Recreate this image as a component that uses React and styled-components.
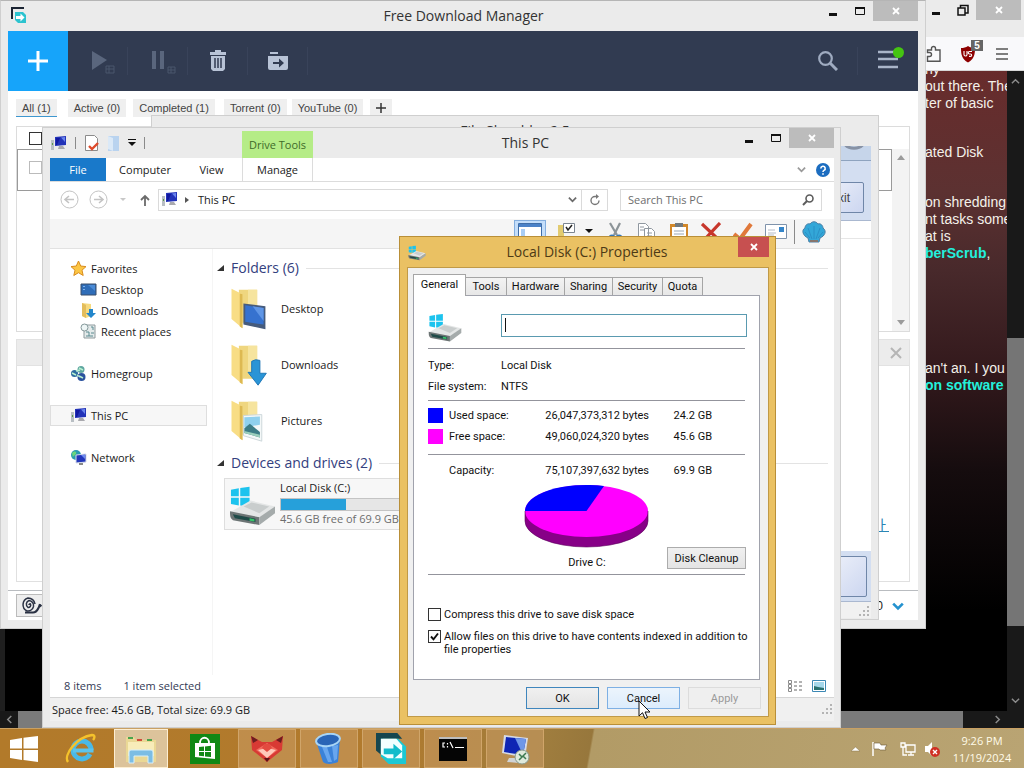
import React from "react";
import styled, { createGlobalStyle, css } from "styled-components";

const UI = `"Open Sans", "Noto Sans", sans-serif`;
const SANS = `"Liberation Sans", Arial, sans-serif`;

const GlobalStyle = createGlobalStyle`
  *, *::before, *::after { box-sizing: border-box; }
  html, body { margin: 0; height: 100%; overflow: hidden; }
  body { font-family: ${UI}; font-size: 11px; line-height: 16px; color: #1a1a1a; }
  button, input { font: inherit; color: inherit; margin: 0; padding: 0; border-radius: 0; }
  h1, h2, p, ul, dl, dd { margin: 0; padding: 0; font-weight: 400; }
  ul { list-style: none; }
  svg { display: block; flex: none; }
`;

/* ---------- desktop ---------- */

const Desktop = styled.div`
  display: flex;
  flex-direction: column;
  height: 100vh;
  background: #000;
  overflow: hidden;
`;

const Workspace = styled.main`
  position: relative;
  flex: 1;
  overflow: hidden;
`;

const Win = styled.section`
  position: absolute;
  display: flex;
  flex-direction: column;
  background: #ebebeb;
  border: 1px solid #cfcfcf;
`;

const Plain = styled.button`
  display: flex;
  align-items: center;
  justify-content: center;
  border: 0;
  background: none;
`;

const Spacer = styled.div`
  flex: 1;
`;

const CaptionGroup = styled.div`
  display: flex;
  align-self: flex-start;
`;

const CaptionButton = styled(Plain)`
  width: ${(p) => (p.$close ? 45 : 27)}px;
  height: 20px;
  background: ${(p) => (p.$close ? "#bcbcbc" : "transparent")};
  color: ${(p) => (p.$close ? "#fff" : "#111")};
`;

function Captions({ restore }) {
  return (
    <CaptionGroup>
      <CaptionButton aria-label="Minimize">
        <svg width="12" height="12" viewBox="0 0 12 12"><path d="M2 8h8v3H2z" fill="currentColor" /></svg>
      </CaptionButton>
      <CaptionButton aria-label="Maximize">
        {restore ? (
          <svg width="12" height="12" viewBox="0 0 12 12" fill="none" stroke="currentColor" strokeWidth="1.5"><path d="M1 4h7v7H1zM3.500 4V1.500H11V9H8" /></svg>
        ) : (
          <svg width="12" height="12" viewBox="0 0 12 12" fill="none" stroke="currentColor"><path d="M1.500 2.500h9v7h-9z" /><path d="M1 3h10" strokeWidth="2" /></svg>
        )}
      </CaptionButton>
      <CaptionButton $close aria-label="Close">
        <svg width="8" height="8" viewBox="0 0 8 8" stroke="currentColor" strokeWidth="1.800"><path d="M1 1l6 6M7 1L1 7" /></svg>
      </CaptionButton>
    </CaptionGroup>
  );
}

/* ---------- browser window behind everything ---------- */

const BrowserWin = styled(Win)`
  inset: 0;
  border: 0;
  background: #1f1f1f;
`;

const BrowserTabs = styled.div`
  display: flex;
  justify-content: flex-end;
  height: 37px;
  padding-right: 3px;
  background: #ebebeb;
`;

const BrowserBar = styled.div`
  display: flex;
  align-items: center;
  justify-content: flex-end;
  gap: 16px;
  height: 34px;
  padding-right: 14px;
  background: #f9f9fb;
  border-bottom: 1px solid #d8d8d8;
`;

const Shield = styled(Plain)`
  position: relative;
  width: 20px;
  height: 20px;
`;

const Badge = styled.span`
  position: absolute;
  top: -4px;
  right: -5px;
  width: 12px;
  background: #666;
  color: #fff;
  font: 700 10px/11px ${SANS};
  text-align: center;
`;

const BrowserView = styled.div`
  display: flex;
  flex: 1;
  min-height: 0;
`;

const WebPage = styled.article`
  flex: 1;
  overflow: hidden;
  margin-left: 5px;
  padding-left: calc(100% - 104px);
  background: linear-gradient(#682c2c 0, #5c3131 120px, #48292b 200px, #33191c 300px, #150c0e 400px, #000 540px);
  color: #f4f1ea;
  font: 14px/17px ${SANS};
  white-space: nowrap;
`;

const Para = styled.p`
  margin-top: ${(p) => p.$gap || 0}px;
`;

const PageLink = styled.a`
  color: #23f0dc;
  font-weight: 700;
  text-decoration: none;
`;

const ScrollTrack = styled.div`
  display: flex;
  flex-direction: column;
  align-items: center;
  width: 17px;
  padding: 6px 0;
  background: #191919;
`;

const ScrollThumb = styled.div`
  width: 17px;
  height: 288px;
  margin-top: 252px;
  background: #757575;
`;

const ScrollFoot = styled.div`
  display: flex;
  align-items: center;
  height: 17px;
  padding: 0 22px 0 5px;
  background: #191919;
`;

const FootThumb = styled.div`
  flex: 1;
  height: 17px;
  margin: 0 30px 0 4px;
  background: #7b7b7b;
`;

function Arrow({ dir = "down", size = 9, color = "#8c8c8c", width = 1.6 }) {
  const d = { down: "M1 3l4 4 4-4", up: "M1 7l4-4 4 4", left: "M7 1L3 5l4 4", right: "M3 1l4 4-4 4" }[dir];
  return <svg width={size} height={size} viewBox="0 0 10 10" fill="none" stroke={color} strokeWidth={width}><path d={d} /></svg>;
}

function Browser() {
  return (
    <BrowserWin aria-label="Browser">
      <BrowserTabs><Captions restore /></BrowserTabs>
      <BrowserBar>
        <Plain aria-label="Extensions">
          <svg width="16" height="18" viewBox="0 0 16 18" fill="none" stroke="#555" strokeWidth="1.400"><path d="M1.500 15.500v-4h2a2 2 0 000-4h-2V5h4V3.500a2 2 0 014 0V5H14v11.300H1.500z" /></svg>
        </Plain>
        <Shield aria-label="Content blocker">
          <svg width="16" height="18" viewBox="0 0 16 18"><path d="M8 1c2 1.500 4.500 2 7 2 0 7-1 11-7 14.500C2 14 1 10 1 3c2.500 0 5-.5 7-2z" fill="#8e0000" /><path d="M4 6v3.500a1.500 1.500 0 003 0V6M12 6.500H9.500a1.200 1.200 0 000 2.500h1a1.200 1.200 0 010 2.400H9" fill="none" stroke="#fff" strokeWidth="1.100" /></svg>
          <Badge>5</Badge>
        </Shield>
        <Plain aria-label="Menu">
          <svg width="16" height="12" viewBox="0 0 16 12" stroke="#555" strokeWidth="1.400"><path d="M2 1h12M2 6h12M2 11h12" /></svg>
        </Plain>
      </BrowserBar>
      <BrowserView>
        <WebPage>
          <Para $gap={-10}>ny<br />out there. The<br />ter of basic</Para>
          <Para $gap={32}>ated Disk</Para>
          <Para $gap={33}>on shredding<br />nt tasks some<br />at is<br /><PageLink href="#scrub">berScrub</PageLink>,</Para>
          <Para $gap={98}>an't an. I you<br /><PageLink href="#software">on software</PageLink></Para>
        </WebPage>
        <ScrollTrack><Arrow dir="up" /><ScrollThumb /><Spacer /><Arrow /></ScrollTrack>
      </BrowserView>
      <ScrollFoot><Arrow dir="left" /><FootThumb /><Arrow dir="right" /></ScrollFoot>
    </BrowserWin>
  );
}

/* ---------- Free Download Manager ---------- */

const FdmWin = styled(Win)`
  top: 0;
  left: 0;
  right: 98px;
  height: 629px;
  padding: 0 7px 8px;
  border-top-color: #b5b5b5;
`;

const WinTitle = styled.header`
  display: flex;
  align-items: center;
  height: 30px;
`;

const TitleText = styled.h1`
  flex: 1;
  padding-left: ${(p) => p.$lead || 0}px;
  font-size: 14px;
  line-height: 20px;
  text-align: center;
  color: #333;
`;

const FdmBar = styled.div`
  display: flex;
  align-items: center;
  height: 60px;
  flex: none;
  background: #313b51;
`;

const AddButton = styled(Plain)`
  width: 60px;
  height: 60px;
  background: #16a4fa;
`;

const ToolButton = styled(Plain)`
  width: 60px;
  height: 28px;
  padding-left: ${(p) => p.$lead || 0}px;
  border-right: ${(p) => (p.$last ? 0 : 1)}px solid #39435a;
`;

const FdmBody = styled.div`
  display: flex;
  flex-direction: column;
  flex: 1;
  background: #fff;
`;

const FilterRow = styled.nav`
  display: flex;
  height: 35px;
  padding: 8px 8px 9px;
`;

const Filter = styled.button`
  height: 18px;
  margin-right: ${(p) => p.$gap || 5}px;
  padding: 0 6px;
  border: 0;
  border-bottom: 1px solid ${(p) => (p.$on ? "#3e97cf" : "#efefef")};
  background: #efefef;
  color: #444;
  font: 11px/16px ${SANS};
  white-space: nowrap;
`;

const ListBox = styled.div`
  display: flex;
  height: 206px;
  margin: 0 8px;
  border: 1px solid #dcdcdc;
`;

const ListRows = styled.div`
  flex: 1;
`;

const ListRow = styled.label`
  display: block;
  height: ${(p) => (p.$head ? 22 : 42)}px;
  padding: ${(p) => (p.$head ? 4 : 11)}px 11px;
  border: 1px solid ${(p) => (p.$head ? "transparent" : "#9a9a9a")};
`;

const BoxTick = styled.input.attrs({ type: "checkbox" })`
  appearance: none;
  display: block;
  flex: none;
  width: 13px;
  height: 13px;
  border: 1px solid ${(p) => (p.$dim ? "#bbb" : "#333")};
  background: #fff;
  &:checked {
    background: #fff url("data:image/svg+xml,%3Csvg xmlns='http://www.w3.org/2000/svg' viewBox='0 0 11 11'%3E%3Cpath d='M2 5.500l2.500 2.800L9 2.500' fill='none' stroke='%23111' stroke-width='1.900'/%3E%3C/svg%3E");
  }
`;

const ListScroll = styled.div`
  display: flex;
  flex-direction: column;
  justify-content: space-between;
  align-items: center;
  width: 17px;
  margin-top: 22px;
  padding: 6px 0;
  background: #f3f3f3;
`;

const DetailHead = styled.div`
  display: flex;
  align-items: center;
  justify-content: flex-end;
  height: 27px;
  margin: 7px 8px 0;
  padding-right: 7px;
  background: #ececec;
  border: 1px solid #e2e2e2;
`;

const DetailBody = styled.div`
  flex: 1;
  margin: 0 8px 8px;
  padding: 150px 20px 0 0;
  border: 1px solid #e0e0e0;
  border-top: 0;
  text-align: right;
`;

const DetailLink = styled.a`
  color: #2a86b5;
  font: 14px/16px "Noto Sans CJK KR", sans-serif;
`;

const FdmStatus = styled.footer`
  display: flex;
  align-items: center;
  height: 30px;
  padding: 0 14px 0 8px;
  border-top: 1px solid #b9bcc0;
  gap: 9px;
  font: 12px/16px ${SANS};
`;

const SnailButton = styled(Plain)`
  width: 60px;
  height: 23px;
  justify-content: flex-start;
  padding-left: 4px;
  border: 1px solid #bbb;
  background: #eee;
`;

function FdmLogo({ size }) {
  return (
    <svg width={size} height={size} viewBox="0 0 32 32">
      <path d="M0 0h22l5 6H7v18L0 18z" fill="#16464f" />
      <path d="M5 6h18l8 8v18H13l-8-8z" fill="#1cc8d4" />
      <path d="M5 6h16l6 7v13H12L5 22z" fill="#f2ffff" />
      <path d="M8 16h10v-5l9 8-9 8v-5H8z" fill="#12bccb" />
    </svg>
  );
}

function FreeDownloadManager() {
  return (
    <FdmWin aria-label="Free Download Manager">
      <WinTitle>
        <svg width="24" height="24" viewBox="0 0 24 24"><path d="M4 15V4h12" fill="none" stroke="#1b2433" strokeWidth="2" /><path d="M7 8h8l3 3v8h-8l-3-3z" fill="#2cc3cf" /><path d="M8 12h4.500v-2.500l4 4-4 4V15H8z" fill="#fff" /></svg>
        <TitleText $lead={76}>Free Download Manager</TitleText>
        <Captions />
      </WinTitle>
      <FdmBar>
        <AddButton aria-label="Add download">
          <svg width="20" height="20" viewBox="0 0 20 20" stroke="#fff" strokeWidth="3"><path d="M10 0v20M0 10h20" /></svg>
        </AddButton>
        <ToolButton $lead={10} aria-label="Start all">
          <svg width="24" height="26" viewBox="0 0 24 26"><path d="M1 3l15 9-15 10z" fill="#5a667d" /><path d="M15 18h8v7h-8zM18 18v7M15 21h8" fill="none" stroke="#4b566c" /></svg>
        </ToolButton>
        <ToolButton $lead={10} aria-label="Pause all">
          <svg width="26" height="26" viewBox="0 0 26 26"><path d="M2 3h4v18H2zM10 3h4v18h-4z" fill="#5a667d" /><path d="M18 19h7v6h-7zM21 19v6M18 22h7" fill="none" stroke="#4b566c" /></svg>
        </ToolButton>
        <ToolButton aria-label="Delete">
          <svg width="18" height="22" viewBox="0 0 18 22"><path d="M6 0h6v2h5v3H1V2h5zM2 6h14v13l-2 2H4l-2-2z" fill="#b8c3d6" /><path d="M6 8v10M9 8v10M12 8v10" stroke="#313b51" strokeWidth="1.500" /></svg>
        </ToolButton>
        <ToolButton aria-label="Move to folder">
          <svg width="20" height="18" viewBox="0 0 20 18"><path d="M2 0h8v2H2zM0 4h20v12a2 2 0 01-2 2H2a2 2 0 01-2-2z" fill="#b8c3d6" /><path d="M5 10h6V6.500L16 11l-5 4.500V12H5z" fill="#313b51" /></svg>
        </ToolButton>
        <Spacer />
        <ToolButton aria-label="Search">
          <svg width="20" height="20" viewBox="0 0 20 20" fill="none" stroke="#9fabc0"><circle cx="7.500" cy="7.500" r="6.300" strokeWidth="2.200" /><path d="M12 12l7 7" strokeWidth="3" /></svg>
        </ToolButton>
        <ToolButton $last $lead={5} aria-label="Menu">
          <svg width="28" height="28" viewBox="0 0 28 28"><path d="M1 5h20M1 12h20M1 20h20" stroke="#aab5c9" strokeWidth="2.600" /><circle cx="21.500" cy="5.500" r="5.500" fill="#45c412" /></svg>
        </ToolButton>
      </FdmBar>
      <FdmBody>
        <FilterRow>
          <Filter $on $gap={11}>All (1)</Filter>
          <Filter $gap={7}>Active (0)</Filter>
          <Filter $gap={9}>Completed (1)</Filter>
          <Filter>Torrent (0)</Filter>
          <Filter $gap={7}>YouTube (0)</Filter>
          <Filter aria-label="Add tag">
            <svg width="10" height="10" viewBox="0 0 10 10" stroke="#333" strokeWidth="1.500"><path d="M5 0v10M0 5h10" /></svg>
          </Filter>
        </FilterRow>
        <ListBox>
          <ListRows>
            <ListRow $head><BoxTick aria-label="Select all" /></ListRow>
            <ListRow><BoxTick $dim aria-label="Select download" /></ListRow>
          </ListRows>
          <ListScroll>
            <svg width="8" height="5" viewBox="0 0 8 5"><path d="M0 5l4-5 4 5z" fill="#9b9b9b" /></svg>
            <svg width="8" height="5" viewBox="0 0 8 5"><path d="M0 0l4 5 4-5z" fill="#9b9b9b" /></svg>
          </ListScroll>
        </ListBox>
        <DetailHead>
          <Plain aria-label="Close details"><svg width="12" height="12" viewBox="0 0 12 12" stroke="#b5b5b5" strokeWidth="2"><path d="M1 1l10 10M11 1L1 11" /></svg></Plain>
        </DetailHead>
        <DetailBody><DetailLink href="#file">ㅏ</DetailLink></DetailBody>
        <FdmStatus>
          <SnailButton aria-label="Snail mode">
            <svg width="22" height="17" viewBox="0 0 22 17" fill="none" stroke="#2a3143"><path d="M8 8a1 1 0 011.500-1A2.500 2.500 0 017 10.500 4 4 0 018 3.500a5 5 0 014.500 6A6 6 0 016 14 7 7 0 017 1a7 7 0 017 6" strokeWidth="1.500" /><path d="M4 15.500h8c4 0 4.500-3 6-5.500l1-3M18 10l2.500-2" strokeWidth="2.200" /></svg>
          </SnailButton>
          <Spacer />
          0
          <Arrow size={12} color="#2492cf" width={2.2} />
        </FdmStatus>
      </FdmBody>
    </FdmWin>
  );
}

/* ---------- File Shredder ---------- */

const ShredWin = styled(Win)`
  top: 115px;
  left: 151px;
  right: 145px;
  height: 505px;
  padding: 0 7px 1px;
`;

const ShredBanner = styled.div`
  display: flex;
  justify-content: flex-end;
  height: 15px;
  overflow: hidden;
  background: #c6d5ea;
  border-bottom: 1px solid #8ea3bf;
`;

const ShredPanel = styled.div`
  display: flex;
  align-items: flex-end;
  justify-content: flex-end;
  height: ${(p) => p.$h}px;
  padding: 0 ${(p) => p.$pad}px ${(p) => p.$pad}px 0;
  background: #d3def1;
  border-bottom: 1px solid #aab8d0;
`;

const ShredButton = styled.button`
  width: 80px;
  height: ${(p) => p.$h}px;
  border: 1px solid #6f86a8;
  border-radius: 2px;
  background: linear-gradient(135deg, #fff, #ccd6f0);
  color: #444;
  text-align: right;
  padding-right: 13px;
  font: 12px/16px ${SANS};
`;

const ShredList = styled.div`
  flex: 1;
  background: #fff;
  padding-top: 17px;
`;

const Line = styled.div`
  height: 1px;
  background: #e6e6e6;
`;

const ShredStatus = styled.div`
  display: flex;
  align-items: flex-end;
  justify-content: flex-end;
  height: 16px;
  background: #f1f1f1;
`;

function Grip() {
  return <svg width="12" height="12" viewBox="0 0 12 12" fill="#b4b4b4"><path d="M8 0h2v2H8zM8 4h2v2H8zM8 8h2v2H8zM4 4h2v2H4zM4 8h2v2H4zM0 8h2v2H0z" /></svg>;
}

function FileShredder() {
  return (
    <ShredWin aria-label="File Shredder">
      <WinTitle><TitleText>File Shredder 2.5</TitleText></WinTitle>
      <ShredBanner>
        <svg width="30" height="14" viewBox="0 0 30 14" fill="none" stroke="#8792a5" strokeWidth="3"><path d="M3 -7a11 9 0 0020 0" transform="translate(0 4)" /></svg>
      </ShredBanner>
      <ShredPanel $h={60} $pad={7}><ShredButton $h={31}>Exit</ShredButton></ShredPanel>
      <ShredList><Line /></ShredList>
      <ShredPanel $h={51} $pad={4}><ShredButton $h={41} aria-label="Shred files" /></ShredPanel>
      <ShredStatus><Grip /></ShredStatus>
    </ShredWin>
  );
}

/* ---------- File Explorer ---------- */

const ExplorerWin = styled(Win)`
  top: 127px;
  left: 42px;
  right: 183px;
  bottom: 0;
  padding: 0 6px 6px 7px;
`;

const QuickBar = styled.div`
  display: flex;
  align-items: center;
  gap: 8px;
  width: 192px;
`;

const Sep = styled.span`
  width: 1px;
  height: ${(p) => p.$h || 12}px;
  background: #8a8a8a;
`;

const DriveTools = styled.div`
  align-self: flex-end;
  width: 71px;
  height: 27px;
  background: #b5ec87;
  color: #3f6a2a;
  line-height: 28px;
  text-align: center;
`;

const Ribbon = styled.nav`
  display: flex;
  align-items: center;
  height: 24px;
  flex: none;
  padding-right: 4px;
  background: #fff;
  border-bottom: 1px solid #dcdcdc;
`;

const RibbonTab = styled.button`
  width: ${(p) => p.$w}px;
  height: 23px;
  padding: 0;
  border: 0;
  background: #fff;
  ${(p) => p.$file && css`background: #1979ca; color: #fff;`}
  ${(p) => p.$tool && css`
    margin-left: 3px;
    border: solid #dcdcdc;
    border-width: 0 1px;
  `}
`;

const AddressRow = styled.div`
  display: flex;
  align-items: center;
  height: 37px;
  flex: none;
  padding: 0 12px 2px 10px;
  background: #fff;
`;

const NavButton = styled(Plain)`
  margin-right: ${(p) => p.$gap || 0}px;
`;

const AddressBox = styled.div`
  display: flex;
  align-items: center;
  flex: 1;
  height: 22px;
  margin-right: 12px;
  padding-left: 2px;
  border: 1px solid #dadada;
`;

const Crumb = styled.span`
  flex: 1;
  padding-left: 2px;
`;

const RefreshButton = styled(Plain)`
  width: 26px;
  height: 20px;
  margin-left: 4px;
  border-left: 1px solid #dadada;
`;

const SearchBox = styled.label`
  display: flex;
  align-items: center;
  width: 202px;
  height: 22px;
  padding: 0 7px;
  border: 1px solid #dadada;
`;

const SearchInput = styled.input`
  flex: 1;
  min-width: 0;
  border: 0;
  outline: 0;
  background: none;
  &::placeholder { color: #6d6d6d; opacity: 1; }
`;

const CommandBar = styled.div`
  display: flex;
  align-items: center;
  justify-content: flex-end;
  gap: 12px;
  height: 30px;
  flex: none;
  padding: 0 8px 4px 0;
  background: #f5f5f5;
  border-bottom: 1px solid #e2e2e2;
`;

const CommandGroup = styled.div`
  display: flex;
  align-items: center;
  gap: 7px;
`;

const Command = styled(Plain)`
  width: ${(p) => p.$w || 20}px;
  height: 24px;
  ${(p) => p.$on && css`background: #c4defa; border: 1px solid #84aede;`}
`;

const ExplorerBody = styled.div`
  display: flex;
  flex: 1;
  min-height: 0;
  background: #fff;
`;

const NavPane = styled.ul`
  width: 163px;
  padding-top: 9px;
  border-right: 1px solid #f5f5f5;
`;

const NavItem = styled.li`
  display: flex;
  align-items: center;
  gap: 4px;
  height: 21px;
  margin: ${(p) => (p.$group ? 21 : 0)}px 5px 0 0;
  padding-left: ${(p) => (p.$child ? 29 : 19)}px;
  border: 1px solid ${(p) => (p.$on ? "#dedede" : "transparent")};
  background: ${(p) => (p.$on ? "#f7f7f7" : "transparent")};
`;

const FilePane = styled.div`
  flex: 1;
  padding: 8px 6px 0 4px;
`;

const GroupHead = styled.h2`
  display: flex;
  align-items: center;
  gap: 7px;
  height: 22px;
  margin: ${(p) => p.$gap || 0}px 0 2px;
  color: #33407e;
  font-size: 14px;
  line-height: 20px;
  &::after { content: ""; flex: 1; height: 1px; background: #e3e3e3; }
`;

const Tile = styled.div`
  display: flex;
  align-items: center;
  gap: 11px;
  width: 248px;
  height: 56px;
  padding-left: 9px;
`;

const DriveTile = styled.div`
  display: flex;
  gap: 4px;
  width: 248px;
  height: 52px;
  margin: 4px 0 0 7px;
  padding: 1px 4px;
  border: 1px solid #dedede;
  background: #f7f7f7;
`;

const DriveInfo = styled.div`
  flex: 1;
  color: #6d6d6d;
`;

const DriveName = styled.div`
  color: #1a1a1a;
`;

const Meter = styled.div`
  height: 13px;
  margin: 2px 0 0;
  border: 1px solid #c4c4c4;
  background: #e6e6e6;
`;

const MeterFill = styled.div`
  width: 35%;
  height: 100%;
  background: #26a0da;
`;

const CountRow = styled.div`
  display: flex;
  align-items: center;
  gap: 22px;
  height: 23px;
  flex: none;
  padding: 0 8px 0 14px;
  background: #fff;
  border-bottom: 1px solid #d5d5d5;
  color: #333a55;
`;

const ViewIcons = styled.div`
  display: flex;
  gap: 9px;
`;

const SpaceRow = styled.footer`
  display: flex;
  align-items: center;
  height: 23px;
  flex: none;
  padding-left: 2px;
  background: #f0f0f0;
`;

function PcIcon({ size = 17 }) {
  return (
    <svg width={size} height={size} viewBox="0 0 17 17">
      <path d="M5 2l11-1v9l-11 1z" fill="#2333b8" /><path d="M6 3l4 0-3 7H6z" fill="#1219a0" /><path d="M11 2.500l4-.4v5z" fill="#6b86ee" />
      <path d="M9 11h4l2 3H8z" fill="#a9a9ae" /><path d="M1 5h3v10H1z" fill="#b9bfc4" /><path d="M2 8h1v2H2z" fill="#5a9d4a" />
    </svg>
  );
}

function DriveIcon({ size }) {
  return (
    <svg width={size} height={size} viewBox="0 0 48 48">
      <path d="M2 10l8-1.500v8H2zM11.500 8.200L21 7v9.500h-9.500zM2 18h8v8l-8-1.500zM11.500 18H21v9.500L11.500 26z" fill="#1cc3ee" />
      <path d="M1 33l21-12 25 6-16 12z" fill="#e4e6e6" /><path d="M15 27l8-4 18 4-10 7z" fill="#c9cdcd" />
      <path d="M1 32l30 6v8L4 41c-3-2-3-5-3-9z" fill="#6d7575" /><path d="M31 38l16-11v7L31 46z" fill="#a5abab" />
      <path d="M4 35l23 4.500V43L6 39z" fill="#1f4a48" /><path d="M21 39l5 1v2.500l-5-1z" fill="#38c56a" />
    </svg>
  );
}

function FolderIcon({ kind, size = 44 }) {
  return (
    <svg width={size} height={size} viewBox="0 0 44 48">
      <path d="M12 3h20v36H14z" fill="#efd67f" /><path d="M22 3h10v30H22z" fill="#f6e49e" />
      <path d="M4 2l12 6v37L4 35z" fill="#f8dd85" /><path d="M13 7l3 1v37l-3-2z" fill="#ddb952" />
      {kind === "desktop" && <><path d="M17 18l24 3v25l-24-5z" fill="#465b7c" /><path d="M19 20l20 3v18l-20-3z" fill="#3672cf" /><path d="M27 21l12 2v14z" fill="#5f96e6" /></>}
      {kind === "downloads" && <path d="M26 20q4-3 9-1v14h7L33 46 22 32h4z" fill="#2a94d6" stroke="#1b73b4" />}
      {kind === "pictures" && <><path d="M17 18l20-1v29l-20-6z" fill="#f4f8f8" stroke="#c9d4d8" /><path d="M18 20l17-1v9L18 31z" fill="#8fd0ee" /><path d="M18 32l6-5 11 9v6l-17-5z" fill="#3c7c86" /><path d="M18 35l17 4v3l-17-5z" fill="#9bcfbc" /></>}
    </svg>
  );
}

function NavIcon({ kind }) {
  if (kind === "pc") return <PcIcon />;
  return (
    <svg width="17" height="17" viewBox="0 0 17 17">
      {kind === "star" && <path d="M8.500 1l2.200 5 5.300.6-4 3.600 1.200 5.300-4.700-2.800-4.700 2.800L5 10.200 1 6.600 6.300 6z" fill="#fcc644" stroke="#d98c1e" />}
      {kind === "desktop" && <><path d="M1 3h15v11H1z" fill="#2f6db8" stroke="#3b4e6b" /><path d="M3 5h2v1H3zM3 8h2v1H3z" fill="#7fb2ec" /><path d="M8 4h7v6z" fill="#4a8bd6" /></>}
      {kind === "downloads" && <><path d="M2 1l9 1v12l-5 2-4-2z" fill="#f6da80" /><path d="M2 1l4 2v13l-4-2z" fill="#e3bd5c" /><path d="M9 7h4v4h3l-5 5-5-5h3z" fill="#2386cb" /></>}
      {kind === "recent" && <><path d="M4 2h11v13H4z" fill="#e3eaea" stroke="#8f9b9e" /><path d="M6 9h3v4M11 4h2v3M11 10h3M6 13h7" fill="none" stroke="#5a8a90" /><circle cx="4.500" cy="4.500" r="3.500" fill="#eef6f6" stroke="#86999b" /></>}
      {kind === "home" && <><circle cx="11" cy="4.500" r="3.500" fill="#5ea6a0" /><circle cx="4.500" cy="8.500" r="3.500" fill="#2d6c9f" /><circle cx="11.500" cy="12" r="4" fill="#2a529e" /><path d="M9 3l4 2M2 8l4 2M9 11l4 2M6 6l4-1M7 10l3 2" stroke="#b8f0d0" strokeWidth="1.500" /></>}
      {kind === "network" && <><circle cx="6" cy="6" r="5" fill="#279ab2" /><path d="M2 4c3-3 5-1 4 1s-3 1-3 4z" fill="#69d67b" /><path d="M6 6l10-1v8L6 14z" fill="#2236bb" stroke="#d3d9e8" /><path d="M11 6l4-.5V10z" fill="#6c89f0" /><path d="M9 14h4v2H9z" fill="#888" /></>}
    </svg>
  );
}

const NAV = [
  ["star", "Favorites"],
  ["desktop", "Desktop", "child"],
  ["downloads", "Downloads", "child"],
  ["recent", "Recent places", "child"],
  ["home", "Homegroup", "group"],
  ["pc", "This PC", "group", true],
  ["network", "Network", "group"],
];

const Fold = () => <svg width="7" height="7" viewBox="0 0 7 7"><path d="M7 0v6H0z" fill="#333" /></svg>;

const RoundArrow = ({ flip }) => (
  <svg width="19" height="19" viewBox="0 0 19 19" fill="none" stroke="#c3c3c3"><circle cx="9.500" cy="9.500" r="8.500" /><path d={flip ? "M5 9.500h9M10 6l4 3.500-4 3.500" : "M14 9.500H5M9 6L5 9.500 9 13"} strokeWidth="1.600" /></svg>
);

function Explorer() {
  return (
    <ExplorerWin aria-label="This PC">
      <WinTitle>
        <QuickBar>
          <PcIcon />
          <Sep />
          <Plain aria-label="Properties"><svg width="15" height="18" viewBox="0 0 15 18"><path d="M1.500 1.500h9l3 3v12h-12z" fill="#fff" stroke="#8b8b8b" /><path d="M5 12l3 3 6-6" fill="none" stroke="#de4b2c" strokeWidth="2.400" /></svg></Plain>
          <Plain aria-label="New folder"><svg width="13" height="17" viewBox="0 0 13 17"><path d="M1 1h11v15H1z" fill="#b9d3ef" /><path d="M1 1l5 2v13l-5-2z" fill="#dbe9f7" /></svg></Plain>
          <Plain aria-label="Customize"><svg width="8" height="8" viewBox="0 0 8 8"><path d="M0 0h8v1H0zM0 3h8L4 7z" fill="#111" /></svg></Plain>
          <Sep />
        </QuickBar>
        <DriveTools>Drive Tools</DriveTools>
        <TitleText $lead={3}>This PC</TitleText>
        <Captions />
      </WinTitle>
      <Ribbon>
        <RibbonTab $w={56} $file>File</RibbonTab>
        <RibbonTab $w={78}>Computer</RibbonTab>
        <RibbonTab $w={55}>View</RibbonTab>
        <RibbonTab $w={71} $tool>Manage</RibbonTab>
        <Spacer />
        <NavButton $gap={10} aria-label="Expand ribbon"><Arrow color="#9a9a9a" width={2} /></NavButton>
        <Plain aria-label="Help">
          <svg width="14" height="14" viewBox="0 0 14 14"><circle cx="7" cy="7" r="7" fill="#1c6dc0" /><path d="M4.800 5.400a2.200 2.200 0 113.200 2c-.8.400-1 .8-1 1.600M7 10.200v1.600" fill="none" stroke="#fff" strokeWidth="1.600" /></svg>
        </Plain>
      </Ribbon>
      <AddressRow>
        <NavButton $gap={10} aria-label="Back"><RoundArrow /></NavButton>
        <NavButton $gap={12} aria-label="Forward"><RoundArrow flip /></NavButton>
        <NavButton $gap={14} aria-label="Recent locations"><svg width="6" height="4" viewBox="0 0 6 4"><path d="M0 0h6L3 3z" fill="#c8c8c8" /></svg></NavButton>
        <NavButton $gap={8} aria-label="Up"><svg width="10" height="12" viewBox="0 0 10 12" fill="none" stroke="#6b6b6b" strokeWidth="1.800"><path d="M5 12V2M1 6l4-4 4 4" /></svg></NavButton>
        <AddressBox>
          <PcIcon />
          <svg width="18" height="8" viewBox="0 0 18 8"><path d="M7 1l4 3-4 3z" fill="#555" /></svg>
          <Crumb>This PC</Crumb>
          <Plain aria-label="Previous locations"><Arrow color="#6b6b6b" width={2} /></Plain>
          <RefreshButton aria-label="Refresh"><svg width="12" height="12" viewBox="0 0 12 12" fill="none" stroke="#777" strokeWidth="1.400"><path d="M10 6.500A4 4 0 116 2.500h2" /><path d="M7 0l3 2.500L7 5z" fill="#777" stroke="none" /></svg></RefreshButton>
        </AddressBox>
        <SearchBox>
          <SearchInput type="search" placeholder="Search This PC" aria-label="Search This PC" />
          <svg width="12" height="12" viewBox="0 0 12 12" fill="none" stroke="#5c5c5c" strokeWidth="1.600"><circle cx="7.500" cy="4.500" r="3.500" /><path d="M5 7l-4 4" strokeWidth="2" /></svg>
        </SearchBox>
      </AddressRow>
      <CommandBar>
        <Command $w={32} $on aria-label="Navigation pane"><svg width="24" height="18" viewBox="0 0 24 18"><path d="M.5.500h23v17H.5z" fill="#fff" stroke="#3f6ea8" /><path d="M1 1h22v3H1z" fill="#4b82c8" /><path d="M3 6h4v11H3z" fill="#a9cdf4" /></svg></Command>
        <CommandGroup>
          <Command aria-label="Select"><svg width="20" height="20" viewBox="0 0 20 20"><path d="M0 3h6v14H0z" fill="#e2cb70" /><path d="M5.500 1.500h11v9h-11z" fill="#fff" stroke="#7b8590" /><path d="M8 5l2 3 4-5" fill="none" stroke="#222" strokeWidth="1.500" /></svg></Command>
          <Command $w={8} aria-label="Select options"><svg width="8" height="5" viewBox="0 0 8 5"><path d="M0 0h8L4 4z" fill="#111" /></svg></Command>
        </CommandGroup>
        <Command aria-label="Cut"><svg width="16" height="20" viewBox="0 0 16 20" fill="none" stroke="#8c9498" strokeWidth="2.200"><path d="M3 1l7 12M13 1L7 13" /><circle cx="5" cy="16" r="2.500" stroke="#3979b5" /><circle cx="12" cy="16" r="2.500" stroke="#3979b5" /></svg></Command>
        <Command aria-label="Copy"><svg width="20" height="20" viewBox="0 0 20 20" fill="#fff" stroke="#9098a0"><path d="M1.500 1.500h7l3 3v10h-10zM7.500 6.500h7l3 3v9h-10z" /><path d="M3 5h4M3 8h4M10 11h5M10 14h5" /></svg></Command>
        <Command aria-label="Paste"><svg width="20" height="20" viewBox="0 0 20 20"><path d="M1 2h18v18H1z" fill="#d2882a" /><path d="M3 5h14v14H3z" fill="#fff" /><path d="M6 1h8v4H6z" fill="#71797e" /><path d="M5 9h10M5 12h10" stroke="#9aa7b5" /></svg></Command>
        <Command aria-label="Delete"><svg width="20" height="20" viewBox="0 0 20 20" stroke="#c7362b" strokeWidth="3.200"><path d="M1 2l17 16M19 1L3 18" /></svg></Command>
        <Command aria-label="Rename"><svg width="20" height="20" viewBox="0 0 20 20" fill="none" stroke="#e0783a" strokeWidth="4"><path d="M1 12l6 5L18 2" /></svg></Command>
        <CommandGroup>
          <Command $w={22} aria-label="Properties"><svg width="22" height="15" viewBox="0 0 22 15"><path d="M.5.500h21v14H.5z" fill="#fff" stroke="#7f93ab" /><path d="M14 3h5v5h-5z" fill="#3585c9" /><path d="M3 6h7M3 9h8M3 11h6" stroke="#b5bdc8" /></svg></Command>
          <Sep $h={24} />
          <Command $w={24} aria-label="Shell options"><svg width="24" height="22" viewBox="0 0 24 22"><path d="M7 21l-1-4C1 15-1 9 3 7c0-3 3-5 5-4 2-3 6-3 8 0 3-1 5 2 5 4 4 3 2 8-3 10l-1 4z" fill="#33a7d8" stroke="#4c7fa5" /><path d="M12 18V5M10 18L6 7M14 18l4-11M8 17l-5-6M16 17l5-6" stroke="#2b90c6" fill="none" /><path d="M8 19h8v2H8z" fill="#86756d" /></svg></Command>
        </CommandGroup>
      </CommandBar>
      <ExplorerBody>
        <NavPane>
          {NAV.map(([icon, label, level, on]) => (
            <NavItem key={label} $child={level === "child"} $group={level === "group"} $on={on}>
              <NavIcon kind={icon} />{label}
            </NavItem>
          ))}
        </NavPane>
        <FilePane>
          <GroupHead><Fold />Folders (6)</GroupHead>
          <Tile><FolderIcon kind="desktop" />Desktop</Tile>
          <Tile><FolderIcon kind="downloads" />Downloads</Tile>
          <Tile><FolderIcon kind="pictures" />Pictures</Tile>
          <GroupHead $gap={3}><Fold />Devices and drives (2)</GroupHead>
          <DriveTile>
            <DriveIcon size={47} />
            <DriveInfo>
              <DriveName>Local Disk (C:)</DriveName>
              <Meter><MeterFill /></Meter>
              45.6 GB free of 69.9 GB
            </DriveInfo>
          </DriveTile>
        </FilePane>
      </ExplorerBody>
      <CountRow>
        <span>8 items</span>
        <span>1 item selected</span>
        <Spacer />
        <ViewIcons>
          <Plain aria-label="Details view"><svg width="15" height="13" viewBox="0 0 15 13" fill="none" stroke="#8b8b8b"><path d="M.5.500h3v3h-3zM.5 4.500h3v3h-3zM.5 8.500h3v3h-3z" /><path d="M6 2h3M11 2h3M6 6h3M11 6h3M6 10h3M11 10h3" stroke="#666" /></svg></Plain>
          <Plain aria-label="Large icons"><svg width="14" height="12" viewBox="0 0 14 12"><path d="M.5.500h13v11H.5z" fill="#fff" stroke="#3c88b4" /><path d="M2 2h10v8H2z" fill="#a5d7ea" /><path d="M2 6l4 1 6 1v2H2z" fill="#28706f" /></svg></Plain>
        </ViewIcons>
      </CountRow>
      <SpaceRow>Space free: 45.6 GB, Total size: 69.9 GB<Spacer /><Grip /></SpaceRow>
    </ExplorerWin>
  );
}

/* ---------- drive properties dialog ---------- */

const Dialog = styled(Win)`
  top: 236px;
  left: 399px;
  width: 377px;
  padding: 0 6px 7px 7px;
  background: #eac163;
  border-color: #b98f38;
  color: #111;
  font: 11px/13px Roboto, ${SANS};
`;

const DialogTitle = styled(WinTitle)`
  font-family: ${UI};
  padding-left: 1px;
`;

const DialogTitleText = styled(TitleText)`
  color: #4d3a16;
`;

const DialogClose = styled(Plain)`
  align-self: flex-start;
  width: 31px;
  height: 20px;
  background: #c75050;
`;

const Client = styled.div`
  padding: 6px 8px 7px 5px;
  background: #f0f0f0;
  border: 1px solid #c09a48;
`;

const TabStrip = styled.div`
  display: flex;
  align-items: flex-end;
  height: 21px;
`;

const Tab = styled.button`
  position: relative;
  width: ${(p) => p.$w}px;
  height: 18px;
  border: 1px solid #a5a5a5;
  border-width: 1px 1px 0 0;
  background: linear-gradient(#f3f3f3, #e7e7e7);
  ${(p) => p.$on && css`
    height: 22px;
    margin-bottom: -1px;
    padding-bottom: 3px;
    border-left-width: 1px;
    background: #fff;
  `}
`;

const TabPanel = styled.div`
  height: 385px;
  padding: 16px 12px 0 14px;
  border: 1px solid #a0a2ac;
  background: #fff;
`;

const NameRow = styled.div`
  display: flex;
  align-items: center;
  justify-content: space-between;
  height: 27px;
`;

const NameInput = styled.input`
  width: 246px;
  height: 23px;
  padding: 0 3px;
  border: 1px solid #5a9ab0;
  outline: 0;
  background: linear-gradient(#111, #111) 3px 3px / 1px 14px no-repeat #fff;
  &:focus { background: #fff; }
`;

const Rule = styled.hr`
  height: 1px;
  margin: ${(p) => p.$top || 0}px 2px ${(p) => p.$bottom || 0}px 0;
  border: 0;
  background: #93949c;
`;

const Facts = styled.dl`
  display: grid;
  grid-template-columns: 73px 1fr;
  grid-auto-rows: 21px;
  align-items: center;
`;

const Sizes = styled.table`
  width: 284px;
  border-collapse: collapse;
  table-layout: fixed;
`;

const Cell = styled.td`
  width: ${(p) => p.$w}px;
  height: 21px;
  padding: 0;
  text-align: right;
  white-space: nowrap;
`;

const LabelCell = styled.th`
  padding: 0 0 0 21px;
  height: 21px;
  font-weight: 400;
  text-align: left;
  background: linear-gradient(${(p) => p.$color}, ${(p) => p.$color}) 0 3px / 15px 15px no-repeat;
`;

const PieWrap = styled.figure`
  display: flex;
  justify-content: center;
  margin: 3px 2px 0 0;
`;

const PieRow = styled.div`
  display: grid;
  grid-template-columns: 1fr 79px;
  align-items: end;
  height: 22px;
  margin: -1px 1px 0 0;
  padding-left: 79px;
  text-align: center;
`;

const PushButton = styled.button`
  width: ${(p) => p.$w || 73}px;
  height: 22px;
  border: 1px solid ${(p) => (p.$tone === "hot" ? "#7eb0e4" : p.$tone === "main" ? "#3f86bd" : "#acacac")};
  background: ${(p) => (p.$tone === "hot" ? "linear-gradient(#ecf4fc, #dcecfc)" : "linear-gradient(#f0f0f0, #e4e4e4)")};
  &:disabled { border-color: #dcdcdc; background: #efefef; color: #9a9a9a; }
`;

const TickRow = styled.label`
  display: flex;
  gap: 3px;
  margin: ${(p) => p.$gap}px -8px 0 0;
`;

const Buttons = styled.div`
  display: flex;
  justify-content: flex-end;
  gap: 8px;
  margin: 7px -1px 0 0;
`;

const TABS = [["Tools", 41], ["Hardware", 58], ["Sharing", 48], ["Security", 50], ["Quota", 40]];

function Pie() {
  return (
    <svg width="125" height="64" viewBox="0 0 125 64">
      <path d="M1 27v10a61.500 26 0 00123 0V27z" fill="#870087" />
      <ellipse cx="62.500" cy="27" rx="61.500" ry="26" fill="#f0f" />
      <path d="M62.500 27H1A61.500 26 0 0180 2z" fill="#00f" />
      <path d="M1 27v10a61.500 26 0 00123 0V27" fill="none" stroke="#5c005c" strokeWidth=".6" />
    </svg>
  );
}

function Properties() {
  return (
    <Dialog role="dialog" aria-label="Local Disk (C:) Properties">
      <DialogTitle>
        <DriveIcon size={18} />
        <DialogTitleText as="h2" $lead={10}>Local Disk (C:) Properties</DialogTitleText>
        <DialogClose aria-label="Close"><svg width="8" height="8" viewBox="0 0 8 8" stroke="#fff" strokeWidth="1.800"><path d="M1 1l6 6M7 1L1 7" /></svg></DialogClose>
      </DialogTitle>
      <Client>
        <TabStrip>
          <Tab $w={53} $on>General</Tab>
          {TABS.map(([name, w]) => <Tab key={name} $w={w}>{name}</Tab>)}
        </TabStrip>
        <TabPanel>
          <NameRow>
            <DriveIcon size={34} />
            <NameInput type="text" aria-label="Drive name" />
          </NameRow>
          <Rule $top={9} $bottom={6} />
          <Facts>
            <dt>Type:</dt><dd>Local Disk</dd>
            <dt>File system:</dt><dd>NTFS</dd>
          </Facts>
          <Rule $top={3} $bottom={4} />
          <Sizes>
            <tbody>
              <tr><LabelCell scope="row" $color="#00f">Used space:</LabelCell><Cell $w={114}>26,047,373,312 bytes</Cell><Cell $w={63}>24.2 GB</Cell></tr>
              <tr><LabelCell scope="row" $color="#f0f">Free space:</LabelCell><Cell $w={114}>49,060,024,320 bytes</Cell><Cell $w={63}>45.6 GB</Cell></tr>
            </tbody>
          </Sizes>
          <Rule $top={7} $bottom={5} />
          <Sizes>
            <tbody>
              <tr><LabelCell scope="row" $color="transparent">Capacity:</LabelCell><Cell $w={114}>75,107,397,632 bytes</Cell><Cell $w={63}>69.9 GB</Cell></tr>
            </tbody>
          </Sizes>
          <PieWrap><Pie /></PieWrap>
          <PieRow><span>Drive C:</span><PushButton $w={79}>Disk Cleanup</PushButton></PieRow>
          <Rule $top={5} />
          <TickRow $gap={33}><BoxTick />Compress this drive to save disk space</TickRow>
          <TickRow $gap={9}><BoxTick defaultChecked />Allow files on this drive to have contents indexed in addition to file properties</TickRow>
        </TabPanel>
        <Buttons>
          <PushButton $tone="main">OK</PushButton>
          <PushButton $tone="hot">Cancel</PushButton>
          <PushButton disabled>Apply</PushButton>
        </Buttons>
      </Client>
    </Dialog>
  );
}

const Pointer = styled.svg`
  position: absolute;
  top: 700px;
  left: 638px;
`;

/* ---------- taskbar ---------- */

const Taskbar = styled.footer`
  display: flex;
  align-items: center;
  height: 40px;
  flex: none;
  border-top: 1px solid #c9a063;
  background: linear-gradient(100deg, #b27a2a 0, #b17a2d 380px, #9f7d3e 540px, #97773c 584px, #b29b66 586px, #b9a473 100%);
`;

const Task = styled(Plain)`
  width: ${(p) => p.$w || 58}px;
  height: 39px;
  margin-right: ${(p) => p.$gap ?? 4}px;
  border: 1px solid ${(p) => (p.$active ? "#fdeed2" : p.$open ? "#d0a56a" : "transparent")};
  background: ${(p) => (p.$active ? "#dcc39b" : p.$open ? "rgba(205, 160, 105, 0.5)" : "none")};
`;

const Tray = styled.div`
  display: flex;
  align-items: center;
  gap: 8px;
`;

const Clock = styled.time`
  width: 76px;
  padding-right: 8px;
  color: #fffbe9;
  font: 11px/17px ${UI};
  text-align: center;
`;

function Taskbars() {
  return (
    <Taskbar>
      <Task $w={48} $gap={8} aria-label="Start"><svg width="28" height="26" viewBox="0 0 28 26" fill="#fff"><path d="M0 4l12-2v10.500H0zM13.500 1.800L28 0v12.500H13.500zM0 14h12v10L0 22zM13.500 14H28v12l-14.500-2z" /></svg></Task>
      <Task $w={50} $gap={8} aria-label="Internet Explorer">
        <svg width="32" height="32" viewBox="0 0 32 32"><path d="M8 17a9 9 0 0118 0M8 17a9 9 0 0017 4" fill="none" stroke="#4ab9e6" strokeWidth="5" /><path d="M8 17.500h20.500" stroke="#5cc4ec" strokeWidth="4" /><path d="M3 29C-2 22 12 4 27 2c4 0 2 4 1 5" fill="none" stroke="#f5c22b" strokeWidth="2.400" /></svg>
      </Task>
      <Task $w={54} $gap={8} $active aria-label="File Explorer">
        <svg width="32" height="30" viewBox="0 0 32 30"><path d="M1 3h8l2 3h20v22H1z" fill="#ead895" /><path d="M3 8h26v14H3z" fill="#f8ecb9" /><path d="M3 4h5M22 6h5" stroke="#4aa44d" strokeWidth="2" /><path d="M12 6h5" stroke="#d24b3a" strokeWidth="2" /><path d="M4 29V18q0-2 2-2h20q2 0 2 2v11h-5v-7H9v7z" fill="#7cbde4" stroke="#d7effa" /></svg>
      </Task>
      <Task aria-label="Store">
        <svg width="30" height="30" viewBox="0 0 30 30"><path d="M0 0h30v30H0z" fill="#108814" /><path d="M5 9h20v16L5 23z" fill="#fff" /><path d="M10 9c0-7 9-7 9 0" fill="none" stroke="#fff" strokeWidth="1.800" /><path d="M9 13l5-.5V17H9zM15 12.400l6-.6V17h-6zM9 18h5v4.300l-5-.5zM15 18h6v5l-6-.6z" fill="#108814" /></svg>
      </Task>
      <Task $open aria-label="Fox app">
        <svg width="34" height="28" viewBox="0 0 34 28"><path d="M1 1l11 6h10l11-6-1 14-15 12L2 15z" fill="#d83a34" /><path d="M1 1l7 4-5 3zM33 1l-7 4 5 3z" fill="#6d1d20" /><path d="M6 15l11-7 11 7-11 8z" fill="#f16b5d" /><path d="M8 15l9-2 9 2-9 8z" fill="#ffc9ba" /><path d="M12 13l5 4 5-4-2-4h-6z" fill="#e34b40" /><path d="M14 23h6l-3 4z" fill="#5d1518" /></svg>
      </Task>
      <Task $open aria-label="Shredder">
        <svg width="30" height="32" viewBox="0 0 30 32"><path d="M2 8l7 21c3 3 11 2 15 0l2-23z" fill="#3b82d8" /><path d="M8 14l6 15h4L13 14zM18 13l2 15 3-2 1-14z" fill="#68a6ee" /><ellipse cx="14" cy="7" rx="12" ry="6" fill="#2a65b6" stroke="#a9d5f5" strokeWidth="2" transform="rotate(-8 14 7)" /></svg>
      </Task>
      <Task $open aria-label="Free Download Manager"><FdmLogo size={31} /></Task>
      <Task $open aria-label="Command Prompt">
        <svg width="28" height="24" viewBox="0 0 28 24"><path d="M0 0h28v24H0z" fill="#050505" /><path d="M0 0h28v2H0z" fill="#bdbdbd" /><path d="M6 6H4v4h2M8.500 6v1.500M8.500 9v1.500M11 5l3 6M16 10.500h9" fill="none" stroke="#fff" strokeWidth="1.200" /></svg>
      </Task>
      <Task $open aria-label="Remote display">
        <svg width="30" height="32" viewBox="0 0 30 32"><path d="M4 2l24 3-3 20-23-5z" fill="#d5dbe8" /><path d="M6 4l20 2-3 16-19-3z" fill="#0e25b4" /><path d="M15 5l11 1-3 16z" fill="#6f97e8" /><path d="M9 25h9l1 5-12-1z" fill="#d1d3d5" /><circle cx="22" cy="24" r="7" fill="#dfe9dc" stroke="#88998b" /><path d="M19 21l3 3-3 3M26 20l-3 3 3 3" fill="none" stroke="#3c7a52" strokeWidth="1.500" /></svg>
      </Task>
      <Spacer />
      <Tray>
        <Plain aria-label="Show hidden icons"><svg width="9" height="6" viewBox="0 0 9 6"><path d="M0 5l4.500-4L9 5z" fill="#fff" stroke="#8b7648" strokeWidth=".5" /></svg></Plain>
        <svg width="24" height="18" viewBox="0 0 24 18"><path d="M5 2v14" stroke="#fff" strokeWidth="1.500" /><path d="M6 3h6l1 2h6l-2 3 1 2h-6l-1-1H6z" fill="#fff" stroke="#6d5936" strokeWidth=".6" /></svg>
        <svg width="16" height="16" viewBox="0 0 16 16" fill="none" stroke="#fff" strokeWidth="1.300"><path d="M6 4h9v7H6zM8 14h6M11 11v3M1 2h4v4H1zM3 6v8h4" /></svg>
        <svg width="16" height="16" viewBox="0 0 16 16"><path d="M1 5h3l4-4v14l-4-4H1z" fill="#fff" /><circle cx="11" cy="11" r="5" fill="#cf2f23" /><path d="M9 9l4 4M13 9l-4 4" stroke="#fff" strokeWidth="1.400" /></svg>
        <Clock>9:26 PM<br />11/19/2024</Clock>
      </Tray>
    </Taskbar>
  );
}

export default function App() {
  return (
    <>
      <GlobalStyle />
      <Desktop>
        <Workspace>
          <Browser />
          <FreeDownloadManager />
          <FileShredder />
          <Explorer />
          <Properties />
          <Pointer width="13" height="20" viewBox="0 0 13 20"><path d="M1 1v15l3.500-3.300L7 18.500l2.500-1L7 12h5z" fill="#fff" stroke="#111" /></Pointer>
        </Workspace>
        <Taskbars />
      </Desktop>
    </>
  );
}
